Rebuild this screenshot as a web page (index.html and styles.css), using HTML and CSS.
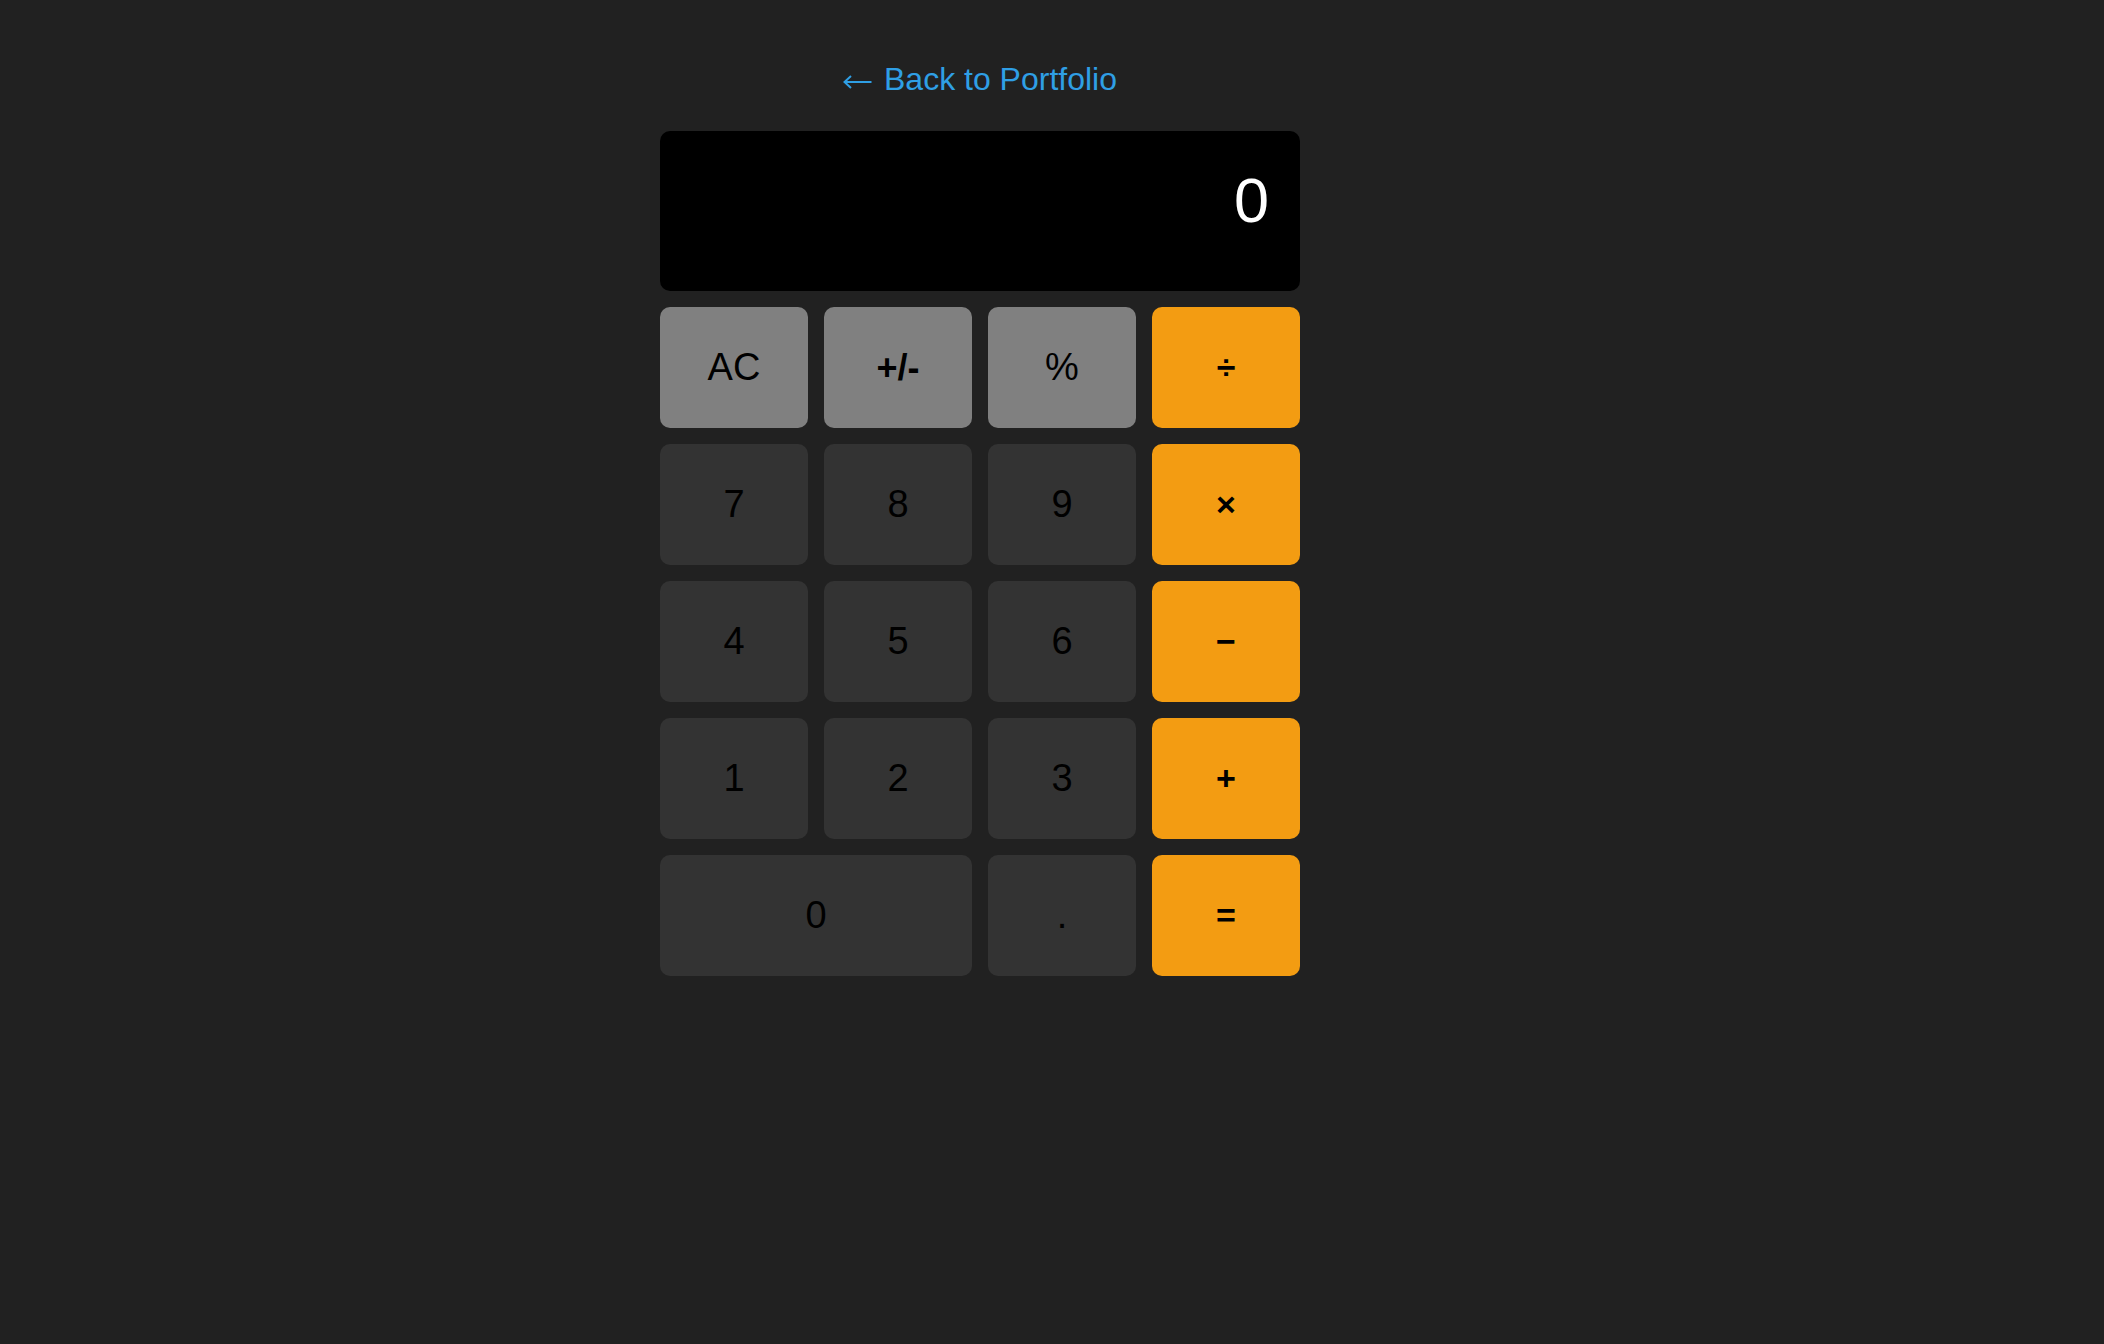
FILE: index.html
```html
<!DOCTYPE html>
<html lang="en">
<head>
<meta charset="utf-8">
<title>Calculator</title>
<link rel="stylesheet" href="styles.css">
</head>
<body>
<main class="page">
  <a class="back-link" href="#"><svg class="arrow" width="29" height="14" viewBox="0 0 29 14" aria-hidden="true"><path d="M1.5 7H28.5M8 1L1.5 7L8 13" fill="none" stroke="currentColor" stroke-width="2"/></svg>Back to Portfolio</a>
  <section class="calculator">
    <div class="display">0</div>
    <div class="keys">
      <button class="key fn">AC</button>
      <button class="key fn sym">+/-</button>
      <button class="key fn">%</button>
      <button class="key op">÷</button>
      <button class="key num">7</button>
      <button class="key num">8</button>
      <button class="key num">9</button>
      <button class="key op">×</button>
      <button class="key num">4</button>
      <button class="key num">5</button>
      <button class="key num">6</button>
      <button class="key op">−</button>
      <button class="key num">1</button>
      <button class="key num">2</button>
      <button class="key num">3</button>
      <button class="key op">+</button>
      <button class="key num zero">0</button>
      <button class="key num">.</button>
      <button class="key op">=</button>
    </div>
  </section>
</main>
</body>
</html>
```
FILE: styles.css
```css
html, body {
  margin: 0;
  padding: 0;
  background: #212121;
  height: 100%;
}

body {
  font-family: "Liberation Sans", Arial, sans-serif;
}

.page {
  width: 640px;
  margin-left: 660px;
  padding-top: 63px;
  display: flex;
  flex-direction: column;
  align-items: center;
}

.back-link {
  color: #2f9fe5;
  text-decoration: none;
  font-size: 32px;
  line-height: 33px;
  margin-bottom: 35px;
}

.arrow {
  vertical-align: 1px;
  margin-right: 12px;
}

.calculator {
  width: 640px;
  display: flex;
  flex-direction: column;
  gap: 16px;
}

.display {
  box-sizing: border-box;
  height: 160px;
  background: #000;
  color: #fff;
  border-radius: 10px;
  font-size: 63px;
  line-height: 74px;
  text-align: right;
  padding: 32px 31px 0 31px;
}

.keys {
  display: grid;
  grid-template-columns: repeat(4, 148px);
  grid-auto-rows: 121px;
  gap: 16px;
}

.key {
  border: none;
  border-radius: 10px;
  font-family: "Liberation Sans", Arial, sans-serif;
  font-size: 38px;
  color: #000;
  padding: 0;
  margin: 0;
}

.fn {
  background: #808080;
}

.sym {
  font-weight: bold;
  font-size: 36px;
}

.num {
  background: #333333;
}

.op {
  background: #f39c12;
  font-weight: bold;
  font-size: 34px;
}

.zero {
  grid-column: span 2;
}
```
